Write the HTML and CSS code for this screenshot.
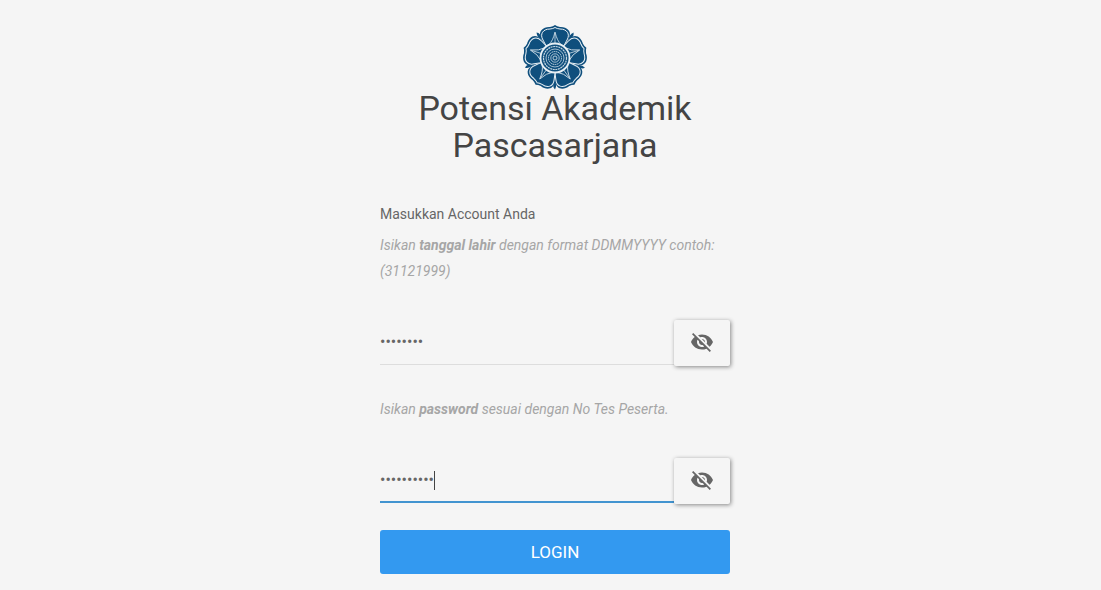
FILE: index.html
```html
<!DOCTYPE html>
<html lang="id">
<head>
<meta charset="utf-8">
<meta name="viewport" content="width=device-width, initial-scale=1">
<title>Potensi Akademik Pascasarjana</title>
<link rel="stylesheet" href="styles.css">
</head>
<body>
<svg class="defs" aria-hidden="true">
  <symbol id="eye-off" viewBox="0 0 24 24"><path d="M12 7c2.76 0 5 2.24 5 5 0 .65-.13 1.26-.36 1.83l2.92 2.92c1.51-1.26 2.7-2.89 3.43-4.75-1.73-4.39-6-7.5-11-7.5-1.4 0-2.74.25-3.98.7l2.16 2.16C10.74 7.13 11.35 7 12 7zM2 4.27l2.28 2.28.46.46C3.08 8.3 1.78 10.02 1 12c1.73 4.39 6 7.5 11 7.5 1.55 0 3.03-.3 4.38-.84l.42.42L19.73 22 21 20.73 3.27 3 2 4.27zM7.53 9.8l1.55 1.55c-.05.21-.08.43-.08.65 0 1.66 1.34 3 3 3 .22 0 .44-.03.65-.08l1.55 1.55c-.67.33-1.41.53-2.2.53-2.76 0-5-2.24-5-5 0-.79.2-1.53.53-2.2zm4.31-.78l3.15 3.15.02-.16c0-1.66-1.34-3-3-3l-.17.01z"/></symbol>
  <symbol id="petal" viewBox="-34 -34 68 68" overflow="visible">
    <path fill="#0f4f7d" d="M0 0L-16-22L-14-20.500C-17.500-27-11-31.500-5-31Q-2-31.500 0-33Q2-31.500 5-31C11-31.500 17.500-27 14-20.500L16-22Z"/>
    <path fill="#0f4f7d" d="M-18.500-25.500Q-14-25-13.500-19Q-18-20.500-18.500-25.500Z"/>
    <path fill="none" stroke="#e8f0f5" stroke-width="1" d="M-8.800-12L-12-18C-15.500-24-12-29-5-29Q-2-29.200 0-30.500Q2-29.200 5-29C12-29 15.500-24 12-18L8.800-12"/>
    <path fill="#0f4f7d" stroke="#c4d6e2" stroke-width=".9" d="M-6.500-13Q-2-17 0-26Q2-17 6.500-13Z"/>
    <path fill="none" stroke="#c4d6e2" stroke-width=".8" d="M0-25V-14"/>
  </symbol>
</svg>
<main class="login">
  <header class="brand">
    <svg class="logo" viewBox="-34 -34 68 68" role="img" aria-label="Logo">
      <use href="#petal" x="-34" y="-34" width="68" height="68"/>
      <use href="#petal" x="-34" y="-34" width="68" height="68" transform="rotate(72)"/>
      <use href="#petal" x="-34" y="-34" width="68" height="68" transform="rotate(144)"/>
      <use href="#petal" x="-34" y="-34" width="68" height="68" transform="rotate(216)"/>
      <use href="#petal" x="-34" y="-34" width="68" height="68" transform="rotate(288)"/>
      <circle r="14.500" fill="#0f4f7d" stroke="#e8f0f5" stroke-width="1.800"/>
      <g fill="none" stroke="#c4d6e2">
        <circle r="11.500" stroke-width="1.200" stroke-dasharray="2 .6"/>
        <circle r="9" stroke-width=".8"/>
        <circle r="6.500" stroke-width="1" stroke-dasharray="1.600 .6"/>
        <circle r="4.200" stroke-width=".8"/>
        <circle r="2" stroke-width=".9"/>
      </g>
    </svg>
    <h1 class="title">Potensi Akademik Pascasarjana</h1>
  </header>
  <form class="form">
    <p class="lead">Masukkan Account Anda</p>
    <label class="hint" for="birth">Isikan <strong>tanggal lahir</strong> dengan format DDMMYYYY contoh: (31121999)</label>
    <div class="field">
      <input class="input" id="birth" type="password" value="31121999">
      <button class="toggle" type="button" aria-label="Tampilkan tanggal lahir"><svg class="icon"><use href="#eye-off"/></svg></button>
    </div>
    <label class="hint" for="password">Isikan <strong>password</strong> sesuai dengan No Tes Peserta.</label>
    <div class="field field-active">
      <input class="input" id="password" type="password" value="1234567890">
      <span class="caret"></span>
      <button class="toggle" type="button" aria-label="Tampilkan password"><svg class="icon"><use href="#eye-off"/></svg></button>
    </div>
    <button class="submit" type="submit">LOGIN</button>
  </form>
</main>
</body>
</html>
```
FILE: styles.css
```css
* { box-sizing: border-box; }
body {
  margin: 0;
  padding-left: 9px;
  background: #f5f5f5;
  color: #666;
  font: 14px/26px Roboto, sans-serif;
}
.defs { position: absolute; width: 0; height: 0; }
.login {
  max-width: 350px;
  margin: 0 auto;
  padding: 24px 0 16px;
}
.brand {
  display: flex;
  flex-direction: column;
  align-items: center;
  text-align: center;
}
.logo { width: 68px; height: 68px; }
.title {
  margin: -2px 0 0;
  color: #444;
  font-size: 34px;
  font-weight: 400;
  line-height: 37px;
}
.form {
  display: flex;
  flex-direction: column;
  padding-top: 37px;
}
.lead { margin: 0 0 5px; }
.hint { color: #a6a6a6; font-style: italic; }
.hint strong { font-weight: 700; }
.field {
  position: relative;
  display: flex;
  height: 46px;
  margin: 36px 0 30px;
}
.field-active { margin-bottom: 26px; }
.input {
  flex: 1;
  min-width: 0;
  height: 45px;
  padding: 0 0 2px;
  border: 0;
  border-bottom: 1px solid #ddd;
  outline: 0;
  background: transparent;
  color: #666;
  font: 16px Roboto, sans-serif;
}
.field-active .input { padding-bottom: 0; border-bottom: 2px solid #4294d0; }
.caret {
  position: absolute;
  left: 54px;
  top: 13px;
  width: 1px;
  height: 19px;
  background: #444;
}
.toggle {
  display: flex;
  align-items: center;
  justify-content: center;
  width: 56px;
  height: 46px;
  padding: 0 0 2px;
  border: 0;
  border-radius: 2px;
  background: #f5f5f5;
  box-shadow: 1px 1px 4px rgba(0, 0, 0, .45);
  color: #666;
}
.icon { width: 24px; height: 24px; fill: currentColor; }
.submit {
  height: 44px;
  padding: 0;
  border: 0;
  border-radius: 3px;
  background: #3399f0;
  color: #fff;
  font: 400 17px Roboto, sans-serif;
}
```
